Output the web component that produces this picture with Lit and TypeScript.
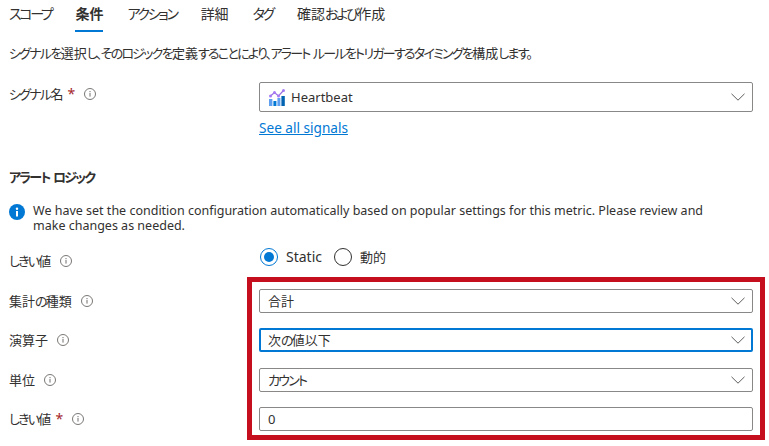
import { LitElement, html, css, svg } from "lit";
import { customElement } from "lit/decorators.js";

const info = html`<svg class="info" viewBox="0 0 12 12" width="12" height="12"><circle cx="6" cy="6" r="5.5" fill="none" stroke="#7a7876" stroke-width="1"/><rect x="5.4" y="5" width="1.2" height="3.6" fill="#8a8886"/><rect x="5.4" y="3" width="1.2" height="1.2" fill="#8a8886"/></svg>`;
const chevron = html`<svg class="chev" viewBox="0 0 14 8" width="14" height="8"><path d="M.5.8 7 7.2 13.5.8" fill="none" stroke="#605e5c" stroke-width="1"/></svg>`;
const chart = svg`<svg class="chart" viewBox="0 0 16 17" width="16" height="17"><rect x="0" y="10" width="3.4" height="7" fill="#5ea0ef"/><rect x="4.4" y="12" width="3" height="5" fill="#0078d4"/><rect x="8.4" y="9" width="3" height="8" fill="#5ea0ef"/><rect x="12.4" y="7" width="3.4" height="10" fill="#0063b1"/><path d="M1.5 7 5.5 3.5 9.5 7 14.5 1.5" fill="none" stroke="#9a6fe0" stroke-width="1.2"/><circle cx="1.5" cy="7" r="1.5" fill="#a67af4"/><circle cx="5.5" cy="3.5" r="1.5" fill="#a67af4"/><circle cx="9.5" cy="7" r="1.5" fill="#a67af4"/><circle cx="14.5" cy="1.5" r="1.5" fill="#a67af4"/></svg>`;

/* The reference's Japanese face has narrow kana: tighten only the kana runs. */
const jp = (text: string) =>
  text.split(/([\u3040-\u30ff、。]+)/).map((part, i) => (i % 2 ? html`<span class="k">${part}</span>` : part));

@customElement("app-root")
export class AppRoot extends LitElement {
  static styles = css`
    :host {
      display: block;
      position: relative;
      width: 769px;
      height: 446px;
      overflow: hidden;
      background: #fff;
      color: #323130;
      font: 13px/18px "Noto Sans", "Noto Sans CJK JP", sans-serif;
      font-feature-settings: "palt";
      box-sizing: border-box;
      padding-left: 9px;
    }
    .k { letter-spacing: -0.135em; }
    .tabs { display: flex; gap: 24px; height: 32px; font-size: 14px; }
    .tabs .k { letter-spacing: -0.165em; }
    .tab { height: 32px; box-sizing: border-box; padding-top: 4px; line-height: 20px; }
    .tab.on { font-weight: 700; border-bottom: 2px solid #0078d4; }
    .desc { margin-top: 12px; height: 18px; }
    .row { display: grid; grid-template-columns: 250px 494px; align-items: center; }
    .label { display: flex; align-items: center; gap: 9px; }
    .req { color: #a4262c; margin-left: 4px; font-size: 14px; }
    .signal { margin-top: 20px; align-items: start; }
    .signal .label { padding-top: 3px; }
    .box {
      box-sizing: border-box; height: 24px; border: 1px solid #8a8886; border-radius: 2px;
      display: flex; align-items: center; justify-content: space-between;
      padding: 0 7px 0 8px; background: #fff;
    }
    .box.tall { height: 30px; padding-left: 9px; }
    .box.focus { border: 2px solid #0078d4; padding-left: 7px; padding-right: 6px; }
    .val { display: flex; align-items: center; gap: 6px; }
    .link { display: block; margin: 7px 0 0 250px; color: #0078d4; text-decoration: underline; font-size: 13.6px; }
    h3 { margin: 31px 0 0; font-size: 13px; line-height: 18px; font-weight: 700; }
    .note { display: flex; gap: 8px; margin-top: 17px; width: 700px; font-size: 12.5px; line-height: 15px; }
    .note svg { flex: none; margin-top: 1px; }
    .thresh { margin-top: 15px; height: 18px; }
    .thresh .label { position: relative; top: 4px; }
    .radios { display: flex; align-items: center; margin-left: 1px; font-size: 14px; }
    .radio { width: 18px; height: 18px; box-sizing: border-box; border-radius: 50%; border: 1px solid #323130; margin-right: 8px; }
    .radio.on { border-color: #0078d4; display: flex; align-items: center; justify-content: center; }
    .radio.on i { width: 10px; height: 10px; border-radius: 50%; background: #0078d4; }
    .sp { margin-right: 12px; }
    .dyn { font-size: 13px; }
    .stack { display: flex; flex-direction: column; gap: 15.33px; margin-top: 23px; }
    .red { position: absolute; left: 247px; top: 277px; width: 518px; height: 163px; box-sizing: border-box; border: 5px solid #c50f1f; pointer-events: none; }
  `;

  rowOf(label: string, value: string, opts: { req?: boolean; focus?: boolean; input?: boolean } = {}) {
    return html`<div class="row">
      <div class="label"><span>${jp(label)}${opts.req ? html`<span class="req">*</span>` : ""}</span>${info}</div>
      <div class="box ${opts.focus ? "focus" : ""}"><span>${jp(value)}</span>${opts.input ? "" : chevron}</div>
    </div>`;
  }

  render() {
    return html`
      <div class="tabs">
        <div class="tab">${jp("スコープ")}</div><div class="tab on">条件</div><div class="tab">${jp("アクション")}</div>
        <div class="tab">詳細</div><div class="tab">${jp("タグ")}</div><div class="tab">${jp("確認および作成")}</div>
      </div>
      <div class="desc">${jp("シグナルを選択し、そのロジックを定義することにより、アラート ルールをトリガーするタイミングを構成します。")}</div>
      <div class="row signal">
        <div class="label"><span>${jp("シグナル名")}<span class="req">*</span></span>${info}</div>
        <div class="box tall"><span class="val">${chart}Heartbeat</span>${chevron}</div>
      </div>
      <a class="link">See all signals</a>
      <h3>${jp("アラート ロジック")}</h3>
      <div class="note">
        <svg viewBox="0 0 16 16" width="16" height="16"><circle cx="8" cy="8" r="8" fill="#0078d4"/><rect x="7" y="7" width="2" height="5.5" fill="#fff"/><circle cx="8" cy="4.7" r="1.2" fill="#fff"/></svg>
        <div>We have set the condition configuration automatically based on popular settings for this metric. Please review and make changes as needed.</div>
      </div>
      <div class="row thresh">
        <div class="label"><span>${jp("しきい値")}</span>${info}</div>
        <div class="radios"><span class="radio on"><i></i></span><span class="sp">Static</span><span class="radio"></span><span class="dyn">動的</span></div>
      </div>
      <div class="stack">
        ${this.rowOf("集計の種類", "合計")}
        ${this.rowOf("演算子", "次の値以下", { focus: true })}
        ${this.rowOf("単位", "カウント")}
        ${this.rowOf("しきい値", "0", { req: true, input: true })}
      </div>
      <div class="red"></div>
    `;
  }
}
